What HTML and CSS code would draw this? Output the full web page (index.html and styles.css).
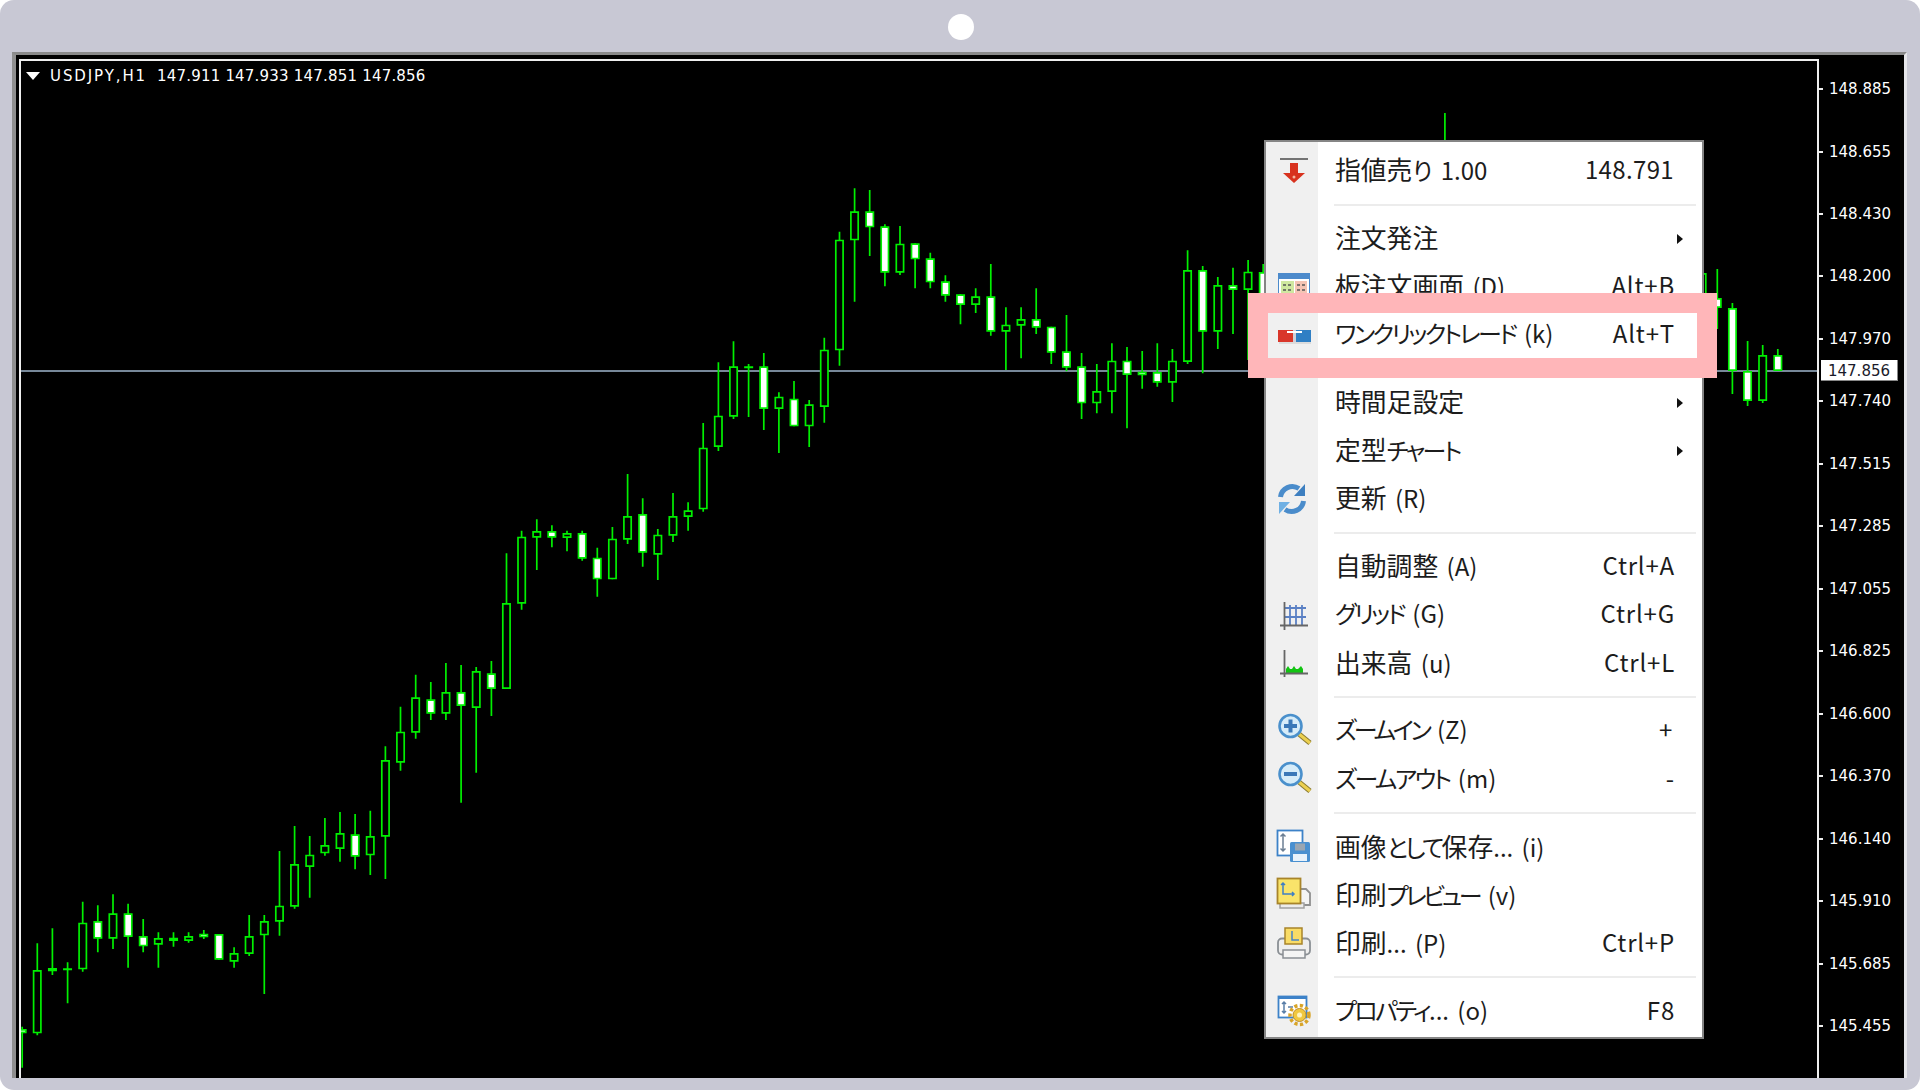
FILE: index.html
```html
<!DOCTYPE html>
<html lang="ja">
<head>
<meta charset="utf-8">
<title>USDJPY,H1</title>
<link rel="stylesheet" href="styles.css">
</head>
<body>
<div class="frame">
  <div class="camera"><span class="camera-dot"></span></div>
  <div class="window">
    <div class="plot">
      <svg class="chart" viewBox="21 61 1796 1017" width="1796" height="1017">
        <line class="price-line" x1="21" y1="371" x2="1817" y2="371"/>
        <path id="wicks" class="wick"/>
        <path id="hollow" class="body-hollow"/>
        <path id="filled" class="body-filled"/>
      </svg>
      <div class="legend"><span class="legend-arrow"></span><span class="legend-text"><span class="legend-symbol">USDJPY,H1</span>  147.911 147.933 147.851 147.856</span></div>
    </div>
    <div class="axis">
      <span class="tick">148.885</span>
      <span class="tick">148.655</span>
      <span class="tick">148.430</span>
      <span class="tick">148.200</span>
      <span class="tick">147.970</span>
      <span class="tick">147.740</span>
      <span class="tick">147.515</span>
      <span class="tick">147.285</span>
      <span class="tick">147.055</span>
      <span class="tick">146.825</span>
      <span class="tick">146.600</span>
      <span class="tick">146.370</span>
      <span class="tick">146.140</span>
      <span class="tick">145.910</span>
      <span class="tick">145.685</span>
      <span class="tick">145.455</span>
      <span class="price-tag">147.856</span>
    </div>
  </div>

  <div class="menu">
    <div class="row">
      <svg class="icon" viewBox="0 0 40 40"><path d="M6 8h28" stroke="#555" stroke-width="1.6" fill="none"/><path d="M16 12h8v10h7L20 32 9 22h7z" fill="#d8321e"/><circle cx="20" cy="26" r="1.5" fill="#f3b7a0"/></svg>
      <span class="label"><span class="kj">指値売</span>り 1.00</span><span class="key price">148.791</span>
    </div>
    <div class="sep"></div>
    <div class="row">
      <span class="icon"></span>
      <span class="label"><span class="kj">注文発注</span></span><span class="arrow"></span>
    </div>
    <div class="row">
      <svg class="icon" viewBox="0 0 40 40"><rect x="4.500" y="6.500" width="31" height="28" fill="#fff" stroke="#4c8acb"/><rect x="5" y="7" width="30" height="5" fill="#4c8acb"/><rect x="7" y="14" width="13" height="18" fill="#cfe8a0"/><rect x="21" y="14" width="12" height="18" fill="#f4c4b4"/><path d="M9 18h3M14 18h3M9 23h3M14 23h3M23 18h3M28 18h3M23 23h3M28 23h3" stroke="#555" stroke-width="1.6"/></svg>
      <span class="label"><span class="kj">板注文画面</span> (D)</span><span class="key">Alt+B</span>
    </div>
    <div class="row">
      <svg class="icon" viewBox="0 0 40 40"><rect x="4" y="15" width="33" height="12" fill="#d0d0d8"/><rect x="4" y="15" width="15" height="12" fill="#d9362a"/><rect x="22" y="15" width="15" height="12" fill="#2f7fc4"/><rect x="13" y="16" width="15" height="2" fill="#fff"/><rect x="5" y="27" width="32" height="2" fill="#dcdcdc"/></svg>
      <span class="label"><span class="kn">ワンクリックトレード</span> (k)</span><span class="key">Alt+T</span>
      <span class="highlight"></span>
    </div>
    <div class="sep"></div>
    <div class="row">
      <span class="icon"></span>
      <span class="label"><span class="kj">時間足設定</span></span><span class="arrow"></span>
    </div>
    <div class="row">
      <span class="icon"></span>
      <span class="label"><span class="kj">定型</span><span class="kn">チャート</span></span><span class="arrow"></span>
    </div>
    <div class="row">
      <svg class="icon" viewBox="0 0 40 40"><g fill="none" stroke="#4a8ccb" stroke-width="5"><path d="M6.500 18A12 12 0 0 1 25 9.500"/><path d="M29.500 22A12 12 0 0 1 11 30.500"/></g><path d="M31 5v12H20z" fill="#3d7fc0"/><path d="M5 35V23h11z" fill="#6fb0e4"/></svg>
      <span class="label"><span class="kj">更新</span> (R)</span>
    </div>
    <div class="sep"></div>
    <div class="row">
      <span class="icon"></span>
      <span class="label"><span class="kj">自動調整</span> (A)</span><span class="key">Ctrl+A</span>
    </div>
    <div class="row">
      <svg class="icon" viewBox="0 0 40 40"><path d="M16 10v20M22 10v20M28 10v20M10 13h22M10 22h22" stroke="#5a80c4" stroke-width="1.8" fill="none"/><path d="M10.500 7v28M6 30.500h28" stroke="#666" stroke-width="1.8" fill="none"/></svg>
      <span class="label"><span class="kn">グリッド</span> (G)</span><span class="key">Ctrl+G</span>
    </div>
    <div class="row">
      <svg class="icon" viewBox="0 0 40 40"><path d="M12 30v-4l2-3 2 3h2l2-3 2 3h2l3-3 2 3v4z" fill="#12c412"/><path d="M10.500 7v27M6 30.500h28" stroke="#666" stroke-width="1.8" fill="none"/></svg>
      <span class="label"><span class="kj">出来高</span> (u)</span><span class="key">Ctrl+L</span>
    </div>
    <div class="sep"></div>
    <div class="row">
      <svg class="icon" viewBox="0 0 40 40"><path d="M25 23l11 9" stroke="#8a7a30" stroke-width="5"/><path d="M25 23l11 9" stroke="#ecd050" stroke-width="3"/><circle cx="16.500" cy="15" r="11" fill="#d6ecf9" stroke="#4a90cc" stroke-width="2.600"/><path d="M10 15h13M16.500 8.500v13" stroke="#3a78b8" stroke-width="4"/></svg>
      <span class="label"><span class="kn kn-tight">ズームイン</span> (Z)</span><span class="key key-sym">+</span>
    </div>
    <div class="row">
      <svg class="icon" viewBox="0 0 40 40"><path d="M25 23l11 9" stroke="#8a7a30" stroke-width="5"/><path d="M25 23l11 9" stroke="#ecd050" stroke-width="3"/><circle cx="16.500" cy="15" r="11" fill="#d6ecf9" stroke="#4a90cc" stroke-width="2.600"/><path d="M10 15h13" stroke="#3a78b8" stroke-width="4"/></svg>
      <span class="label"><span class="kn">ズームアウト</span> (m)</span><span class="key">-</span>
    </div>
    <div class="sep"></div>
    <div class="row">
      <svg class="icon" viewBox="0 0 40 40"><rect x="3.500" y="3.500" width="25" height="25" fill="#fff" stroke="#3d82c8" stroke-width="1.800"/><path d="M9 7v17M6.500 9.500L9 7l2.500 2.500M6.500 21.500L9 24l2.500-2.500" fill="none" stroke="#6c7f94" stroke-width="1.500"/><rect x="16" y="15" width="20" height="20" rx="1.500" fill="#4a90d0"/><rect x="21" y="16.500" width="10" height="7" fill="#9aa6b2"/><rect x="19" y="27" width="14" height="7" fill="#e8f2fb"/></svg>
      <span class="label"><span class="kj">画像</span><span class="kn">として</span><span class="kj">保存</span>... (i)</span>
    </div>
    <div class="row">
      <svg class="icon" viewBox="0 0 40 40"><path d="M24 14h8l4 4v12H24z" fill="#f4f4f4" stroke="#8f8f8f" stroke-width="1.800"/><rect x="6" y="28" width="24" height="5" fill="#ececec" stroke="#a0a0a0" stroke-width="1.500"/><rect x="3.500" y="3.500" width="23" height="25" fill="#f9e36a" stroke="#a8842a" stroke-width="1.800"/><path d="M9 8v11h11M7 10l2-2 2 2M18 17l2 2-2 2" fill="none" stroke="#3f7fc4" stroke-width="1.500"/></svg>
      <span class="label"><span class="kj">印刷</span><span class="kn kn-tight">プレビュー</span> (v)</span>
    </div>
    <div class="row">
      <svg class="icon" viewBox="0 0 40 40"><rect x="4" y="14.500" width="32" height="16" rx="4" fill="#eeeeee" stroke="#8a8f94" stroke-width="1.800"/><rect x="11" y="4" width="17" height="16" fill="#f9dc66" stroke="#a8842a" stroke-width="1.500"/><path d="M18 7v9h7" fill="none" stroke="#4a84c4" stroke-width="1.500"/><rect x="9" y="26" width="22" height="8" fill="#f4f4f4" stroke="#8a8f94" stroke-width="1.500"/></svg>
      <span class="label"><span class="kj">印刷</span>... (P)</span><span class="key">Ctrl+P</span>
    </div>
    <div class="sep"></div>
    <div class="row">
      <svg class="icon" viewBox="0 0 40 40"><rect x="4.500" y="5.500" width="28" height="21" fill="#fff" stroke="#3d82c8" stroke-width="1.800"/><rect x="4.500" y="5" width="28" height="3" fill="#3d82c8"/><path d="M10 11v11M8 13l2-2 2 2M8 20l2 2 2-2M14 16h5" fill="none" stroke="#5a7fa8" stroke-width="1.500"/><circle cx="25.500" cy="24" r="9.500" fill="none" stroke="#d8a428" stroke-width="3.500" stroke-dasharray="3.200 2.400"/><circle cx="25.500" cy="24" r="6.500" fill="#f0c840" stroke="#c0902a"/><circle cx="25.500" cy="24" r="2.500" fill="#fdf3c0"/></svg>
      <span class="label"><span class="kn">プロパティ</span>... (o)</span><span class="key">F8</span>
    </div>
  </div>
</div>
<script src="chart.js"></script>
</body>
</html>
```
FILE: styles.css
```css
* { box-sizing: border-box; }

html, body {
  margin: 0;
  padding: 0;
  background: #ffffff;
}

.frame {
  position: relative;
  width: 1920px;
  height: 1090px;
  background: #c8c8d4;
  border-radius: 14px;
  overflow: hidden;
  display: flex;
  flex-direction: column;
}

.camera {
  height: 52px;
  display: flex;
  align-items: center;
  justify-content: center;
  flex: none;
}

.camera-dot {
  width: 26px;
  height: 26px;
  border-radius: 50%;
  background: #ffffff;
  margin-left: 2px;
  margin-top: 2px;
}

.window {
  display: flex;
  height: 1026px;
  margin: 0 13px 0 12px;
  background: #000000;
  border-top: 3px solid #8a8a8a;
  border-left: 4px solid #8f8f8f;
  border-right: 3px solid #e6e6ea;
  padding-top: 4px;
  padding-left: 3px;
}

.plot {
  position: relative;
  width: 1800px;
  height: 1019px;
  flex: none;
  border-top: 2px solid #eeeeee;
  border-left: 2px solid #eeeeee;
  border-right: 2px solid #eeeeee;
}

.chart {
  display: block;
}

.price-line {
  stroke: #778899;
  stroke-width: 2;
}

.wick {
  fill: none;
  stroke: #00f000;
  stroke-width: 1.7;
}

.body-hollow {
  fill: #000000;
  stroke: #00f000;
  stroke-width: 1.7;
}

.body-filled {
  fill: #ffffff;
  stroke: #00f000;
  stroke-width: 1.7;
}

.legend {
  position: absolute;
  left: 5px;
  top: 5px;
  display: flex;
  align-items: center;
  gap: 10px;
  color: #ffffff;
  font-family: "DejaVu Sans", sans-serif;
  font-size: 15px;
  line-height: 20px;
}

.legend-arrow {
  width: 0;
  height: 0;
  border-left: 7px solid transparent;
  border-right: 7px solid transparent;
  border-top: 8px solid #ffffff;
}

.legend-text {
  white-space: pre;
  letter-spacing: 0.2px;
}

.legend-symbol {
  letter-spacing: 1.9px;
}

.axis {
  position: relative;
  flex: none;
  width: 85px;
  display: flex;
  flex-direction: column;
  margin-top: -1.2px;
  color: #ffffff;
  font-family: "DejaVu Sans", sans-serif;
  font-size: 15px;
}

.tick {
  height: 62.47px;
  flex: none;
  display: flex;
  align-items: center;
  gap: 6px;
}

.tick::before {
  content: "";
  width: 4px;
  height: 2px;
  background: #eeeeee;
}

.price-tag {
  position: absolute;
  left: 2px;
  top: 302.2px;
  width: 77px;
  height: 21px;
  padding-top: 1px;
  background: #ffffff;
  color: #1a1a2a;
  border-right: 1px solid #888888;
  border-bottom: 1px solid #888888;
  display: flex;
  align-items: center;
  justify-content: center;
}

.menu {
  position: absolute;
  left: 1264px;
  top: 140px;
  width: 440px;
  height: 899px;
  border: 2px solid #858585;
  padding-top: 4.6px;
  background: linear-gradient(90deg, #f0f0f0 52px, #ffffff 52px);
  color: #1c1c1c;
  font-family: "Noto Sans CJK JP", sans-serif;
  font-size: 24px;
  font-feature-settings: "palt";
  display: flex;
  flex-direction: column;
}

.row {
  position: relative;
  height: 48.2px;
  flex: none;
  display: flex;
  align-items: center;
  padding-right: 19px;
}

.icon {
  width: 40px;
  height: 40px;
  margin-left: 8px;
  margin-right: 21px;
  flex: none;
}

.label {
  flex: 1;
  white-space: pre;
  word-spacing: 3px;
  padding-bottom: 4.4px;
}

.kj {
  font-size: 25.8px;
}

.kn {
  letter-spacing: -2.6px;
}

.kn-tight {
  letter-spacing: -3.3px;
}

.key {
  margin-right: 8px;
  padding-bottom: 4.4px;
  letter-spacing: 0.8px;
}

.key-sym {
  margin-right: 10px;
}

.price {
  margin-right: 9px;
  letter-spacing: 0.35px;
}

.arrow {
  width: 0;
  height: 0;
  border-top: 5px solid transparent;
  border-bottom: 5px solid transparent;
  border-left: 6px solid #111111;
}

.sep {
  height: 19.67px;
  flex: none;
  margin: 0 6px 0 68px;
  position: relative;
}

.sep::after {
  content: "";
  position: absolute;
  left: 0;
  right: 0;
  top: 8.8px;
  height: 2px;
  background: #ececec;
}

.highlight {
  position: absolute;
  z-index: 1;
  left: -18px;
  right: -15px;
  top: -18px;
  bottom: -19px;
  border: 20px solid #ffb6b9;
  pointer-events: none;
}
```
FILE: chart.js
```js
// Candles read from the chart: [index, wickTop, wickBottom, bodyTop, bodyBottom, whiteFill]
// Groups hold values at 3x zoom, measured from the group's origin y.
var groups = [
  { y: 850, rows: [
    [-1,530,653,537,550,1],[0,280,556,360,550,0],[1,235,375,354,364,1],[2,337,460,355,357,0],
    [3,155,365,218,358,0],[4,166,307,213,266,1],[5,133,297,190,266,0],[6,161,353,190,261,1],
    [7,207,307,258,289,1],[8,247,353,264,284,0],[9,247,290,263,273,1],[10,247,278,258,273,0],
    [11,240,267,251,262,1],[12,252,329,252,329,1],[13,292,353,309,335,0],[14,195,318,258,312,0],
    [15,195,432,213,256,0],[16,3,257,167,215,0]
  ]},
  { y: 0, rows: [
    [17,2478,2726,2592,2720,0],[18,2508,2693,2564,2601,0],[19,2454,2567,2535,2560,0],
    [20,2436,2585,2499,2547,0],[21,2442,2608,2503,2570,1]
  ]},
  { y: 620, rows: [
    [22,572,765,648,706,0],[23,379,777,420,650,0],[24,260,452,335,428,0],[25,164,356,232,338,0],
    [26,186,300,238,281,1],[27,129,300,216,281,0],[28,135,548,216,258,1],[29,141,458,153,264,0],
    [30,123,288,160,207,1]
  ]},
  { y: 340, rows: [
    [31,640,1047,789,1047,0],[32,572,809,590,791,0],[33,538,690,573,593,0],[34,556,622,573,593,1],
    [35,572,634,579,594,0],[36,572,662,579,656,1],[37,623,770,653,718,1],[38,561,718,596,718,0],
    [39,402,612,528,599,0],[40,475,680,522,638,1],[41,567,720,584,644,0],[42,459,606,528,587,0],
    [43,487,572,511,531,0],[44,249,515,323,508,0],[45,67,333,227,321,0],[46,4,237,79,230,0],
    [47,72,231,79,82,0],[48,39,270,79,207,1],[49,157,339,170,207,0],[50,123,259,176,259,1],
    [51,180,321,193,259,0]
  ]},
  { y: 170, rows: [
    [52,503,758,539,711,0],[53,185,587,209,541,0],[54,55,395,124,211,0],[55,60,258,124,172,1],
    [56,163,349,169,308,1],[57,168,315,221,308,0],[58,220,355,220,268,1],[59,248,355,265,337,1],
    [60,316,395,334,377,1],[61,373,463,373,405,1],[62,355,429,379,405,0],[63,282,497,379,485,1],
    [64,412,600,464,485,0],[65,412,565,447,467,0],[66,355,492,447,473,1],[67,470,582,470,548,1],
    [68,435,604,544,593,1],[69,549,747,589,700,1],[70,582,730,663,700,0],[71,520,730,572,666,0],
    [72,531,775,572,615,1],[73,543,656,605,616,1],[74,520,650,606,638,1],[75,537,696,572,638,0],
    [76,241,582,300,576,0],[77,288,610,300,485,1],[78,321,537,345,485,0],[79,293,492,345,360,1],
    [80,270,570,305,360,0]
  ]},
  { y: 0, rows: [
    [81,792,1080,816,1080,1],[93,339,600,600,660,0],[110,819,1080,819,1080,0],
    [111,807,987,894,924,1],[112,909,1182,924,1113,1],[113,1023,1218,1113,1203,1],
    [114,1035,1209,1065,1203,0],[115,1047,1113,1065,1113,1]
  ]}
];

var wicks = "", hollow = "", filled = "";
var SPACING = 15.135, ORIGIN = 37.3, HALF = 3.65, STROKE = 1.7;

groups.forEach(function (group) {
  group.rows.forEach(function (c) {
    var x = ORIGIN + SPACING * c[0];
    var to = function (v) { return (group.y + v / 3).toFixed(1); };
    wicks += "M" + x.toFixed(1) + " " + to(c[1]) + "V" + to(c[2]);
    var top = group.y + c[3] / 3 + STROKE / 2;
    var height = Math.max((c[4] - c[3]) / 3 - STROKE, 0.2);
    var rect = "M" + (x - HALF).toFixed(1) + " " + top.toFixed(1) +
      "h" + (HALF * 2).toFixed(1) + "v" + height.toFixed(1) +
      "h" + (-HALF * 2).toFixed(1) + "z";
    if (c[5]) filled += rect; else hollow += rect;
  });
});

document.getElementById("wicks").setAttribute("d", wicks);
document.getElementById("hollow").setAttribute("d", hollow);
document.getElementById("filled").setAttribute("d", filled);
```
